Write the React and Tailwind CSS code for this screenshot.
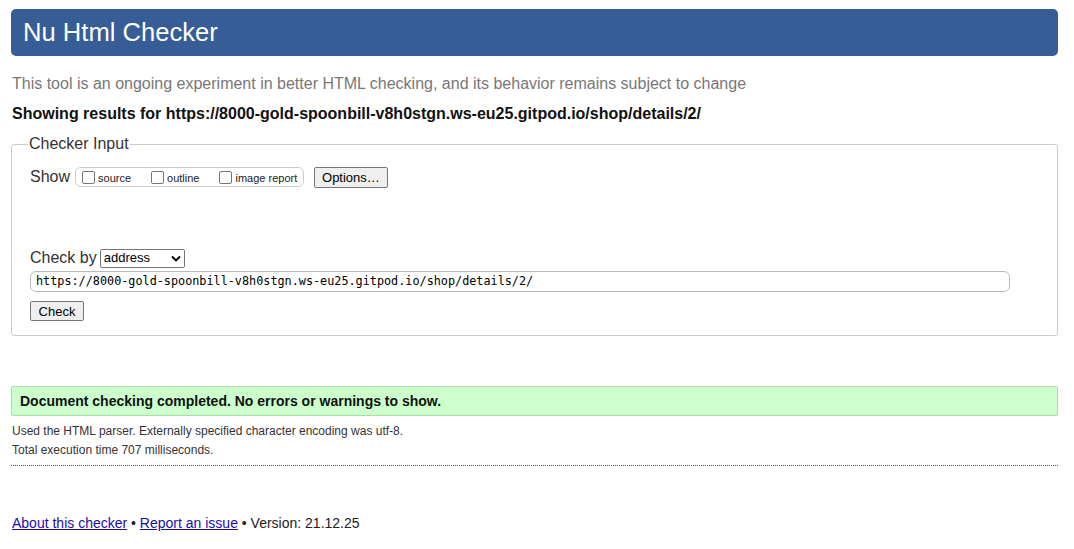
import React from 'react';

const url = 'https://8000-gold-spoonbill-v8h0stgn.ws-eu25.gitpod.io/shop/details/2/';

function Box({ label }) {
    return (
        <label className="flex items-center">
            <span className="inline-block w-[13px] h-[13px] border border-[#767676] rounded-[2px] bg-white mr-[3px]" />
            <span className="text-[11px] mt-[3px]">{label}</span>
        </label>
    );
}

export default function App() {
    return (
        <div className="w-[1074px] h-[549px] bg-white text-[#222] font-['Liberation_Sans',Arial,sans-serif] pl-[11px] pt-[9px] overflow-hidden">
            <div className="w-[1047px]">
                <header className="h-[47px] bg-[#365d95] rounded-[5px] flex items-center pl-[12px]">
                    <h1 className="text-white text-[25.6px] leading-none">Nu Html Checker</h1>
                </header>

                <p className="mt-[18px] text-[16px] text-[#777] pl-[1px] leading-[20px]">
                    This tool is an ongoing experiment in better HTML checking, and its behavior remains subject to change
                </p>
                <p className="mt-[10px] text-[16px] font-bold text-[#111] pl-[1px] leading-[20px]">
                    Showing results for {url}
                </p>

                {/* Checker Input fieldset */}
                <fieldset className="mt-[8px] border border-[#ccc] rounded-[3px] px-[18px] pb-[14px]">
                    <legend className="text-[16px] text-[#333] px-[1px] ml-[-2px]">Checker Input</legend>
                    <div className="flex items-center mt-[9px]">
                        <span className="text-[16px] text-[#333]">Show</span>
                        <div className="ml-[5px] h-[20px] w-[229px] border border-[#ccc] rounded-[6px] flex items-center gap-[20px] pl-[6px]">
                            <Box label="source" />
                            <Box label="outline" />
                            <Box label="image report" />
                        </div>
                        <button className="ml-[10px] h-[21px] px-[7px] text-[13px] border border-[#767676] rounded-[2px] bg-[#efefef] text-black">
                            Options…
                        </button>
                    </div>

                    <div className="flex items-center mt-[57px]">
                        <span className="text-[16px] text-[#333]">Check by</span>
                        <div className="ml-[3px] w-[85px] h-[19px] border border-[#767676] rounded-[2px] flex items-center justify-between px-[3px] text-[13px] text-black">
                            <span>address</span>
                            <svg width="10" height="7" viewBox="0 0 10 7">
                                <path d="M1 1.5 L5 5.5 L9 1.5" fill="none" stroke="#000" strokeWidth="1.8" />
                            </svg>
                        </div>
                    </div>
                    <div className="mt-[1px] w-[980px] h-[21px] border border-[#bbb] rounded-[6px] flex items-center pl-[5px] font-['DejaVu_Sans_Mono',monospace] text-[11.8px] text-black">
                        {url}
                    </div>
                    <button className="block mt-[9px] h-[20px] w-[54px] text-[13px] border border-[#767676] rounded-[2px] bg-[#efefef] text-black">
                        Check
                    </button>
                </fieldset>

                <div className="mt-[50px] h-[30px] bg-[#ccffcc] border border-[#aaddaa] rounded-[2px] flex items-center pl-[8px] text-[14px] font-bold text-[#111]">
                    Document checking completed. No errors or warnings to show.
                </div>
                <p className="mt-[6px] text-[12px] text-[#333] leading-[18px] pl-[1px]">
                    Used the HTML parser. Externally specified character encoding was utf-8.
                </p>
                <p className="mt-[1px] text-[12px] text-[#333] leading-[18px] pl-[1px]">Total execution time 707 milliseconds.</p>
                <div className="mt-[6px] border-t border-dotted border-[#555]" />

                <footer className="mt-[47px] text-[14px] text-[#222] pl-[1px]">
                    <a href="#" className="text-[#1a0dab] underline">About this checker</a>
                    {' • '}
                    <a href="#" className="text-[#1a0dab] underline">Report an issue</a>
                    {' • Version: 21.12.25'}
                </footer>
            </div>
        </div>
    );
}
